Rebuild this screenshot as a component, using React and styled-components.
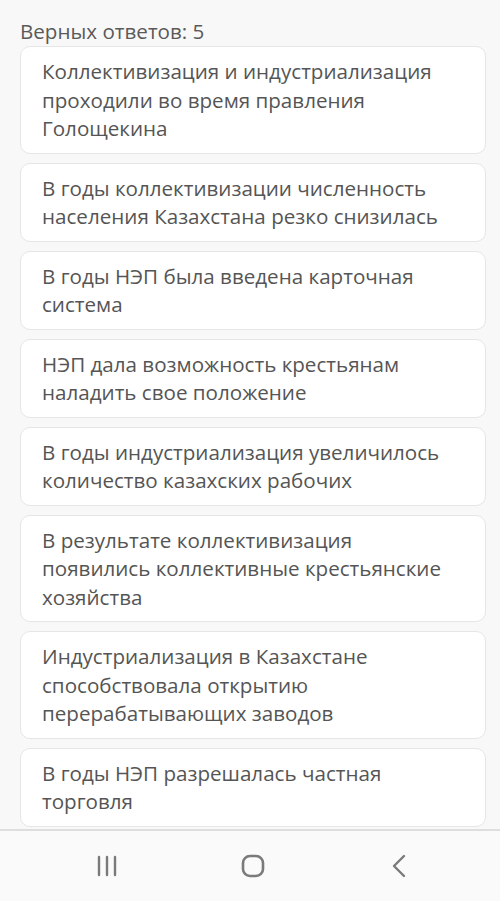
import React from "react";
import styled, { createGlobalStyle } from "styled-components";

const Global = createGlobalStyle`
  html, body { margin: 0; padding: 0; background: #f8f8f8; }
  body { font-family: "Open Sans", "Noto Sans", sans-serif; }
`;

const Page = styled.div`
  width: 500px;
  height: 901px;
  display: flex;
  flex-direction: column;
  background: #f8f8f8;
  overflow: hidden;
`;

const Content = styled.div`
  flex: 1;
  display: flex;
  flex-direction: column;
  padding: 19px 14px 0 20px;
  gap: 9px;
  overflow: hidden;
`;

const Header = styled.div`
  font-size: 20.6px;
  line-height: 24px;
  color: #5a5a5a;
  margin-bottom: -6px;
`;

const Card = styled.div`
  background: #ffffff;
  border: 1px solid #e6e6e6;
  border-radius: 10px;
  padding: 10px 12px 10px 21px;
  font-size: 20.6px;
  line-height: 28.5px;
  color: #555555;
  flex-shrink: 0;
  white-space: nowrap;
`;

const NavBar = styled.div`
  height: 70px;
  border-top: 2px solid #dedede;
  background: #fafafa;
  display: grid;
  grid-template-columns: repeat(3, 146px);
  align-items: center;
  padding: 0 0 0 34px;
  flex-shrink: 0;
`;

const NavButton = styled.div`
  display: flex;
  justify-content: center;
  align-items: center;
`;

const items = [
  ["Коллективизация и индустриализация", "проходили во время правления", "Голощекина"],
  ["В годы коллективизации численность", "населения Казахстана резко снизилась"],
  ["В годы НЭП была введена карточная", "система"],
  ["НЭП дала возможность крестьянам", "наладить свое положение"],
  ["В годы индустриализация увеличилось", "количество казахских рабочих"],
  ["В результате коллективизация", "появились коллективные крестьянские", "хозяйства"],
  ["Индустриализация в Казахстане", "способствовала открытию", "перерабатывающих заводов"],
  ["В годы НЭП разрешалась частная", "торговля"],
];

export default function App() {
  return (
    <Page>
      <Global />
      <Content>
        <Header>Верных ответов: 5</Header>
        {items.map((lines, i) => (
          <Card key={i}>
            {lines.map((l, j) => (
              <div key={j}>{l}</div>
            ))}
          </Card>
        ))}
      </Content>
      <NavBar>
        <NavButton>
          <svg width="22" height="24" viewBox="0 0 22 24">
            <g stroke="#7a7a7a" strokeWidth="2.4" strokeLinecap="round">
              <line x1="3" y1="3" x2="3" y2="21" />
              <line x1="11" y1="3" x2="11" y2="21" />
              <line x1="19" y1="3" x2="19" y2="21" />
            </g>
          </svg>
        </NavButton>
        <NavButton>
          <svg width="24" height="24" viewBox="0 0 24 24">
            <rect x="2" y="2" width="20" height="20" rx="7" fill="none" stroke="#7a7a7a" strokeWidth="2.6" />
          </svg>
        </NavButton>
        <NavButton>
          <svg width="16" height="26" viewBox="0 0 16 26">
            <polyline points="13,3 3,13 13,23" fill="none" stroke="#7a7a7a" strokeWidth="2.4" strokeLinecap="round" strokeLinejoin="round" />
          </svg>
        </NavButton>
      </NavBar>
    </Page>
  );
}
